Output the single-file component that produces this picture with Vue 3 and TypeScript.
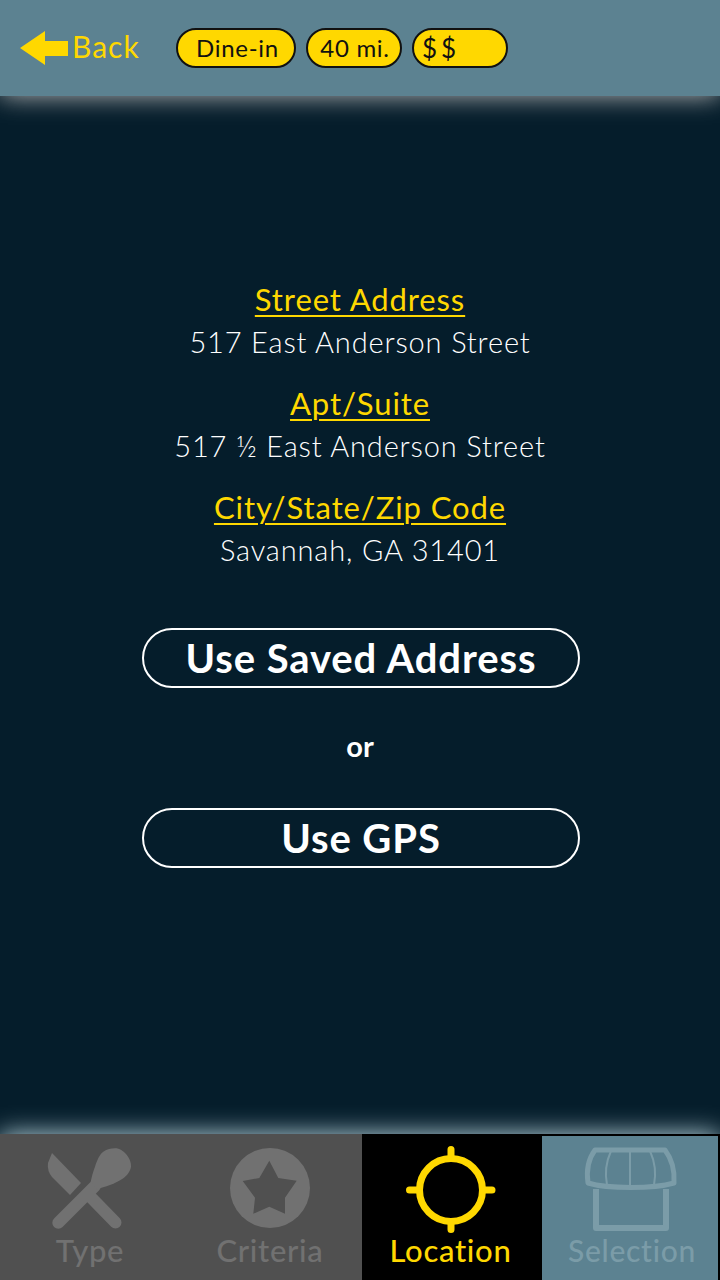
<script setup lang="ts">
interface Field { label: string; value: string }
const fields: Field[] = [
  { label: 'Street Address', value: '517 East Anderson Street' },
  { label: 'Apt/Suite', value: '517 ½ East Anderson Street' },
  { label: 'City/State/Zip Code', value: 'Savannah, GA 31401' },
]
</script>

<template>
  <div class="screen">
    <header class="top">
      <button class="back">
        <svg class="arrow" width="48" height="34" viewBox="0 0 48 34"><path d="M0 17 25 0V10H48V25H25V34Z" fill="#ffd800" /></svg>
        <span>Back</span>
      </button>
      <div class="pills">
        <span class="pill dine">Dine-in</span>
        <span class="pill miles">40 mi.</span>
        <span class="pill price">$$</span>
      </div>
    </header>

    <main class="main">
      <div v-for="f in fields" :key="f.label" class="field">
        <div class="label"><u>{{ f.label }}</u></div>
        <div class="value">{{ f.value }}</div>
      </div>
      <button class="action first">Use Saved Address</button>
      <div class="or">or</div>
      <button class="action">Use GPS</button>
    </main>

    <nav class="tabs">
      <div class="tab off t1">
        <svg width="90" height="90" viewBox="0 0 90 90" fill="#717171">
          <path d="M7 8 36 38 25 50 7 32Q2 26 3 18Z" />
          <path d="M45.4 51.7 70.5 77.5M13.3 77.7 50 41" stroke="#717171" stroke-width="12" stroke-linecap="round" fill="none" />
          <path d="M70 3.3C78 3 87 14 86 21.7 85 28 80 32 78.3 33.3 70 39 60 42 51.7 44.3L45.7 36.7C47 31 48 27 50 21.7 52 15 55 9 58.3 6.7 62 4 66 3.3 70 3.3Z" />
        </svg>
        <span>Type</span>
      </div>
      <div class="tab off t2">
        <svg width="90" height="90" viewBox="0 0 90 90">
          <circle cx="45" cy="43" r="40" fill="#717171" />
          <path d="M44.3 15.7 53.3 33 71.7 35.7 60 52.7 60 68.7 44.3 61.7 28.3 68.7 30 52.7 17.7 36 34.3 33Z" fill="#505050" />
        </svg>
        <span>Criteria</span>
      </div>
      <div class="tab active">
        <svg width="90" height="90" viewBox="0 0 90 90" fill="none" stroke="#ffd800" stroke-width="7" stroke-linecap="round">
          <circle cx="45" cy="45" r="31.5" />
          <path d="M45 4.5V12M45 78V84.5M3.5 45H12M78 45H86" />
        </svg>
        <span>Location</span>
      </div>
      <div class="tab sel">
        <svg width="100" height="90" viewBox="0 0 100 90" fill="none" stroke="#7b9ca8" stroke-linejoin="round">
          <path stroke-width="5" d="M17 5H87C93 13 97 23 96 38 75 44 30 44 10 38 8 24 11 13 17 5Z" />
          <path stroke-width="6" d="M18 44V83H88V44" />
          <path stroke-width="2" d="M52 6V41M33 6C28 17 27 30 29 40M72 6C77 17 78 30 76 40" />
        </svg>
        <span>Selection</span>
      </div>
    </nav>
  </div>
</template>

<style>
html, body { margin: 0; padding: 0; background: #051d2b; }
</style>

<style scoped>
.screen {
  width: 720px;
  height: 1280px;
  display: flex;
  flex-direction: column;
  overflow: hidden;
  background: #051d2b;
  font-family: Lato, "Open Sans", sans-serif;
}
.top {
  height: 96px;
  flex: none;
  display: flex;
  align-items: flex-start;
  padding: 28px 0 0 20px;
  box-sizing: border-box;
  background: #5c8291;
  box-shadow: 0 0 24px 0 #b8b8b8;
  position: relative;
  z-index: 1;
}
.back {
  display: flex;
  align-items: center;
  gap: 4px;
  width: 156px;
  height: 40px;
  padding: 0 0 4px;
  box-sizing: border-box;
  border: 0;
  background: none;
  color: #ffd800;
  font: 400 30px Lato, sans-serif;
  letter-spacing: 1px;
}
.arrow { flex: none; margin-top: 4px; }
.pills { display: flex; gap: 10px; }
.pill {
  height: 40px;
  box-sizing: border-box;
  border: 2px solid #111;
  border-radius: 20px;
  background: #ffd800;
  color: #111;
  font-size: 24px;
  line-height: 36px;
  letter-spacing: 0.7px;
  text-align: center;
}
.dine { width: 120px; padding-left: 3px; }
.miles { width: 96px; padding-left: 2px; }
.price { width: 96px; text-align: left; padding-left: 8px; letter-spacing: 4px; font-size: 26px; }
.main {
  flex: 1;
  display: flex;
  flex-direction: column;
  align-items: center;
  padding-top: 182px;
  box-sizing: border-box;
}
.field { text-align: center; margin-bottom: 20px; }
.label {
  height: 42px;
  color: #ffd800;
  font-size: 31px;
  line-height: 42px;
  letter-spacing: 0.9px;
}
.label u { text-decoration-thickness: 2px; text-underline-offset: 4px; }
.value {
  height: 42px;
  color: #fff;
  font-size: 29px;
  font-weight: 300;
  line-height: 44px;
  letter-spacing: 0.85px;
}
.action {
  width: 438px;
  height: 60px;
  box-sizing: border-box;
  padding: 0;
  margin-left: 2px;
  border: 2px solid #fff;
  border-radius: 30px;
  background: none;
  color: #fff;
  font: 700 40px/54px Lato, sans-serif;
  letter-spacing: 0.9px;
}
.first { margin-top: 38px; }
.or {
  height: 120px;
  color: #fff;
  font-size: 29px;
  font-weight: 700;
  line-height: 116px;
}
.tabs {
  height: 146px;
  flex: none;
  display: flex;
  background: #000;
  box-shadow: 0 0 24px 0 #c0dbe2;
  position: relative;
  z-index: 1;
}
.tab {
  display: flex;
  flex-direction: column;
  align-items: center;
  box-sizing: border-box;
  font-size: 31px;
  font-weight: 500;
  line-height: 36px;
  letter-spacing: 0.7px;
}
.tab svg { display: block; flex: none; margin-top: 11px; }
.tab span { margin-top: -3px; }
.off { background: #505050; color: #717171; }
.t1 { width: 180px; }
.t2 { width: 182px; padding-right: 2px; }
.active { width: 180px; padding-right: 3px; background: #000; color: #ffd800; }
.sel {
  width: 176px;
  height: 144px;
  margin-top: 2px;
  padding-left: 4px;
  background: #5c8291;
  color: #7b9ca8;
}
.sel svg { margin-top: 9px; margin-left: -8px; }
.sel span { font-size: 30px; }
</style>
